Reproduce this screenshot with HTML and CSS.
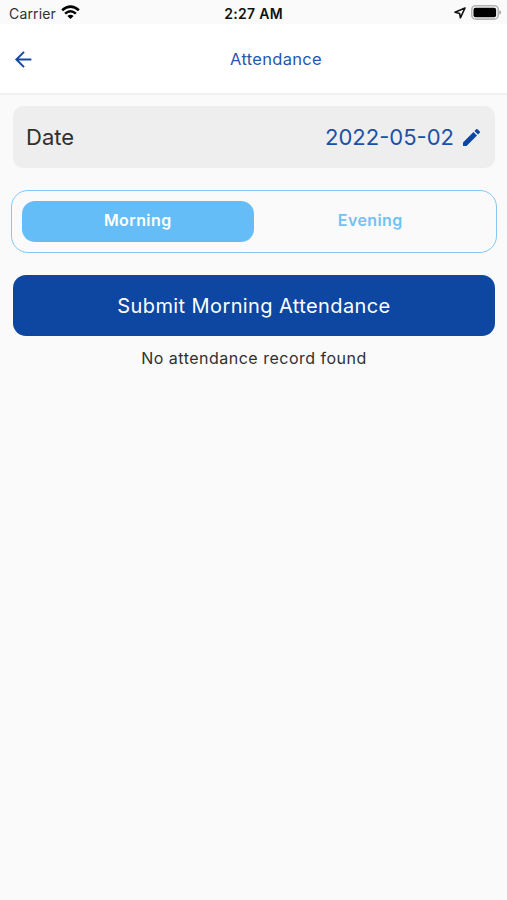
FILE: index.html
```html
<!DOCTYPE html>
<html lang="en">
<head>
<meta charset="utf-8">
<title>Attendance</title>
<link rel="stylesheet" href="styles.css">
</head>
<body>
<div class="status">
  <div class="carrier"><span>Carrier</span>
    <svg class="wifi" width="19" height="15" viewBox="0 0 19 15" fill="none" stroke="#000" stroke-width="2.5"><path d="M1.1 5.2Q9.5-1.9 17.9 5.2"/><path d="M4.1 8.6Q9.5 4 14.9 8.6"/><path d="M9.5 14 6.4 10.9Q9.5 8.6 12.6 10.9Z" fill="#000" stroke="none"/></svg>
  </div>
  <time class="clock">2:27 AM</time>
  <div class="indicators">
    <svg class="location" width="12" height="12" viewBox="0 0 12 12" fill="none" stroke="#111" stroke-width="1.6" stroke-linejoin="round"><path d="M11 1 1 5.2 5.6 6.4 6.4 10.8Z"/></svg>
    <svg width="31" height="15" viewBox="0 0 31 15"><rect x=".7" y=".7" width="26.6" height="13.4" rx="4.2" fill="#fafafa" stroke="#b4b4b4" stroke-width="1.6"/><rect x="2.5" y="2.7" width="22.6" height="9.6" rx="2" fill="#000"/><path d="M28.2 5.2Q30.2 5.8 30.2 7.4T28.2 9.6Z" fill="#aaa"/></svg>
  </div>
</div>
<header class="appbar">
  <svg class="back" width="18" height="18" viewBox="0 0 18 18" fill="none" stroke="#1549a5" stroke-width="2"><path d="M17.4 9.5H3M10 1.9 2.4 9.5 10 17.1"/></svg>
  <h1>Attendance</h1>
</header>
<main>
  <section class="date">
    <span class="label">Date</span>
    <span class="value">2022-05-02</span>
    <svg width="17" height="17" viewBox="3 3 18 18" fill="#0d47a1"><path d="M3 17.25V21h3.75L17.81 9.94l-3.75-3.75zM20.71 7.04a1 1 0 0 0 0-1.41l-2.34-2.34a1 1 0 0 0-1.41 0l-1.83 1.83 3.75 3.75z"/></svg>
  </section>
  <div class="tabs">
    <div class="tab active">Morning</div>
    <div class="tab">Evening</div>
  </div>
  <div class="submit">Submit Morning Attendance</div>
  <p class="empty">No attendance record found</p>
</main>
</body>
</html>
```
FILE: styles.css
```css
* { box-sizing: border-box; }
body {
  margin: 0;
  min-height: 900px;
  background: #fafafa;
  color: #303030;
  font-family: Inter, "Liberation Sans", sans-serif;
}
svg { display: block; flex: none; }
.status {
  display: grid;
  grid-template-columns: 1fr auto 1fr;
  align-items: center;
  height: 24px;
  padding: 3px 5px 0 9px;
}
.carrier { display: flex; align-items: center; gap: 5px; font-size: 14px; line-height: 20px; letter-spacing: .15px; }
.wifi { margin-top: -2px; }
.clock { margin-left: -4px; font-size: 14px; font-weight: 600; color: #111; line-height: 20px; letter-spacing: .3px; }
.indicators { display: flex; align-items: center; justify-content: flex-end; gap: 5px; margin-top: -2px; }
.location { margin-top: 1px; }
.appbar {
  display: grid;
  grid-template-columns: 18px 1fr;
  align-items: center;
  height: 71px;
  padding: 1px 0 0 14px;
  background: #fff;
  border-bottom: 2px solid #f0f0f0;
}
h1 { margin: 0; padding-left: 13px; text-align: center; font-size: 16.5px; font-weight: 400; color: #2457ad; letter-spacing: .3px; }
main { padding: 11px 12px 0 13px; }
.date {
  display: flex;
  align-items: center;
  height: 62px;
  padding: 0 15px 0 13px;
  border-radius: 10px;
  background: #eee;
  font-size: 22px;
}
.value { margin-left: auto; margin-right: 9px; color: #1c50a8; }
.tabs {
  display: flex;
  height: 63px;
  margin: 22px -2px 0;
  padding: 9.5px;
  border: 1.4px solid #86c8f3;
  border-radius: 17px;
}
.tab { flex: 1; height: 41px; border-radius: 13px; color: #72c1f5; text-align: center; font-size: 16px; font-weight: 600; line-height: 38px; letter-spacing: .4px; }
.active { background: #64bdf6; color: #fff; }
.submit { height: 61px; margin-top: 22px; border-radius: 13px; background: #0d47a1; color: #fff; text-align: center; font-size: 20px; line-height: 63px; letter-spacing: .4px; }
.empty { margin: 12px 0 0; text-align: center; font-size: 16px; line-height: 20px; letter-spacing: .5px; }
```
